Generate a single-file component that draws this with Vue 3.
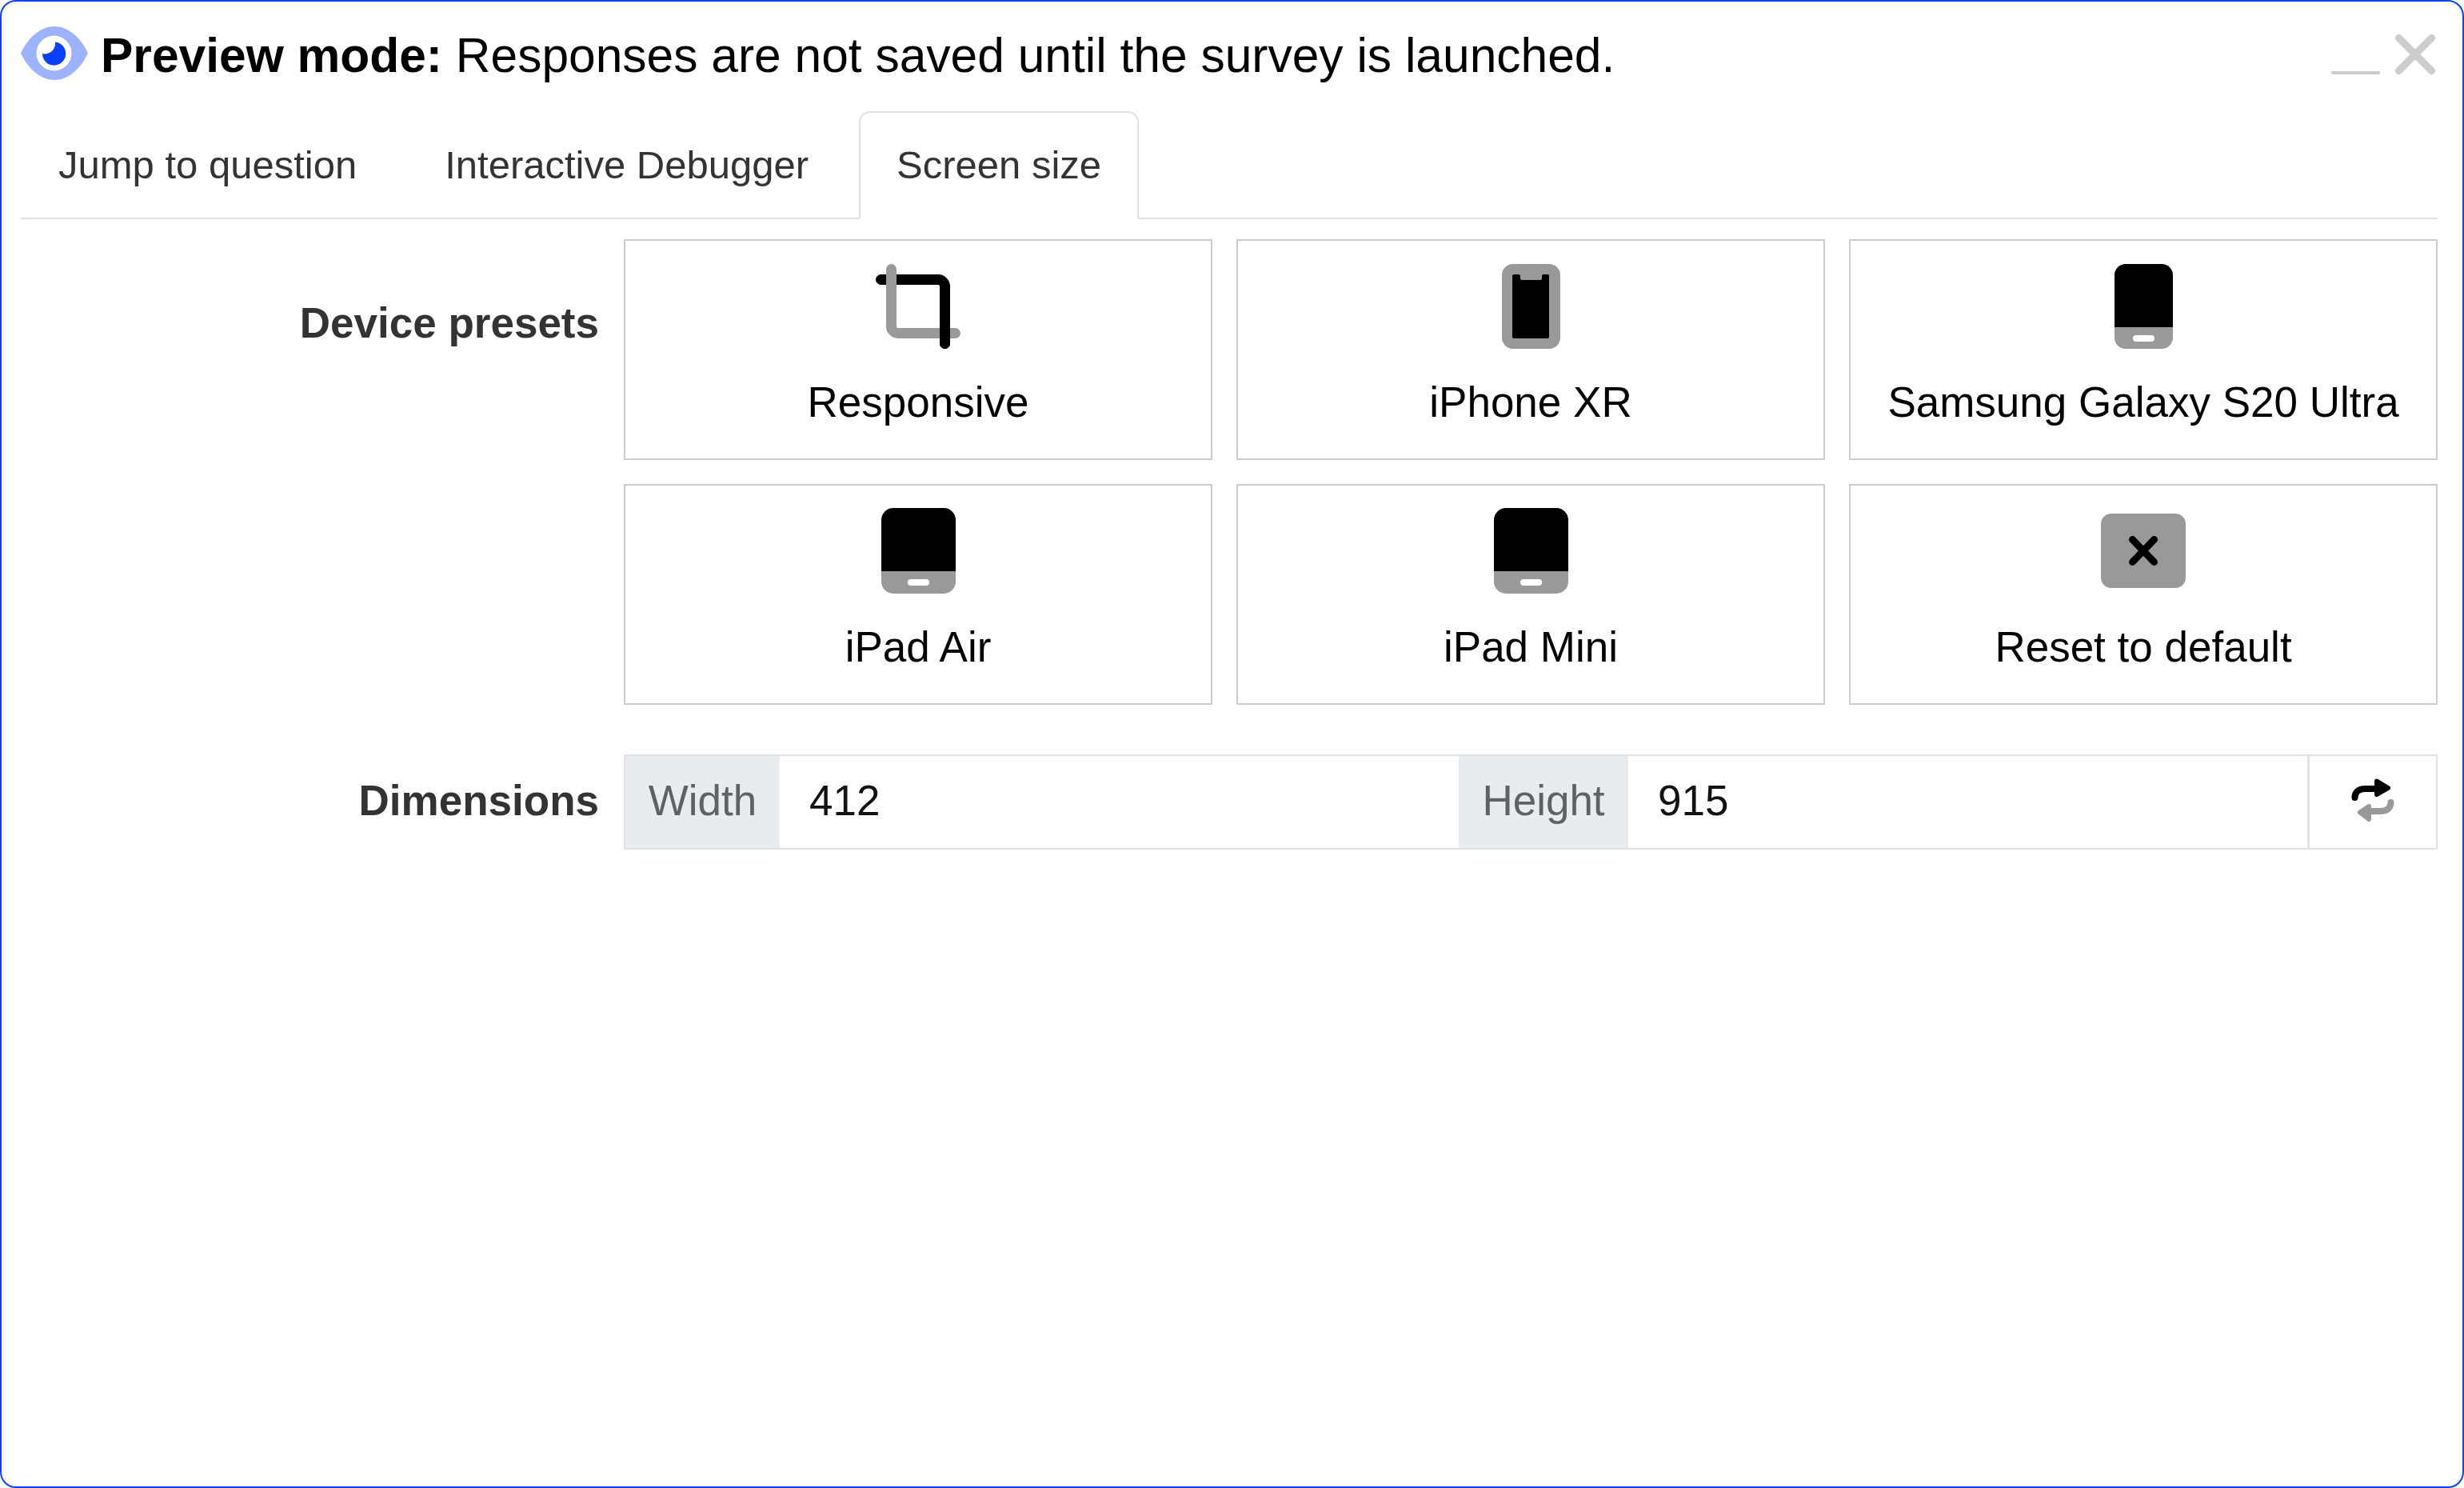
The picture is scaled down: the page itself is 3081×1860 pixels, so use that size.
<script setup>
const presets = [
  { label: 'Responsive', icon: 'crop' },
  { label: 'iPhone XR', icon: 'notch' },
  { label: 'Samsung Galaxy S20 Ultra', icon: 'phone' },
  { label: 'iPad Air', icon: 'tablet' },
  { label: 'iPad Mini', icon: 'tablet' },
  { label: 'Reset to default', icon: 'reset' },
]
</script>

<template>
  <div class="win">
    <header class="head">
      <svg class="eye" viewBox="0 0 84 67">
        <path d="M0 33.500C10 12 26 0 42 0C58 0 74 12 84 33.500C74 55 58 67 42 67C26 67 10 55 0 33.500Z" fill="#9db3ff" />
        <circle cx="41.500" cy="33.500" r="22" fill="#fff" />
        <path d="M43 19.500A14.600 14.600 0 1 1 27 34A13 13 0 0 0 43 19.500Z" fill="#0b3fff" />
      </svg>
      <p class="notice"><strong>Preview mode:</strong> Responses are not saved until the survey is launched.</p>
      <div class="winbtns">
        <svg class="min" viewBox="0 0 61 4"><rect width="61" height="4" rx="2" fill="#ccc" /></svg>
        <svg class="close" viewBox="0 0 50 50"><path d="M4.500 4.500L45.500 45.500M45.500 4.500L4.500 45.500" stroke="#ccc" stroke-width="9" stroke-linecap="round" /></svg>
      </div>
    </header>

    <nav class="tabs">
      <span class="tab">Jump to question</span>
      <span class="tab">Interactive Debugger</span>
      <span class="tab active">Screen size</span>
    </nav>

    <section class="form">
      <div class="label label-top">Device presets</div>
      <div class="presets">
        <button v-for="p in presets" :key="p.label" class="preset">
          <span class="icon-box">
            <svg v-if="p.icon === 'crop'" width="106" height="106" viewBox="0 0 106 106" fill="none" stroke-width="13" stroke-linecap="round">
              <path d="M6.500 19.500H78A8.500 8.500 0 0 1 86.500 28V99.500" stroke="#000" />
              <path d="M19.500 6.500V78A8.500 8.500 0 0 0 28 86.500H99.500" stroke="#999" />
              <path d="M86.500 70V99.500" stroke="#000" />
            </svg>
            <svg v-else-if="p.icon === 'notch'" width="73" height="106" viewBox="0 0 73 106">
              <rect width="73" height="106" rx="14" fill="#999" />
              <path d="M15 13H21A2 2 0 0 1 23 15V18A2 2 0 0 0 25 20H48A2 2 0 0 0 50 18V15A2 2 0 0 1 52 13H57A2 2 0 0 1 59 15V91A2 2 0 0 1 57 93H15A2 2 0 0 1 13 91V15A2 2 0 0 1 15 13Z" fill="#000" />
            </svg>
            <svg v-else-if="p.icon === 'phone'" width="73" height="106" viewBox="0 0 73 106">
              <path d="M0 79H73V92A14 14 0 0 1 59 106H14A14 14 0 0 1 0 92Z" fill="#999" />
              <path d="M14 0H59A14 14 0 0 1 73 14V79H0V14A14 14 0 0 1 14 0Z" fill="#000" />
              <rect x="23" y="89" width="27" height="8" rx="4" fill="#fff" />
            </svg>
            <svg v-else-if="p.icon === 'tablet'" width="93" height="107" viewBox="0 0 93 107">
              <path d="M0 79H93V92A15 15 0 0 1 78 107H15A15 15 0 0 1 0 92Z" fill="#999" />
              <path d="M15 0H78A15 15 0 0 1 93 15V79H0V15A15 15 0 0 1 15 0Z" fill="#000" />
              <rect x="33" y="89" width="27" height="8" rx="4" fill="#fff" />
            </svg>
            <svg v-else width="106" height="93" viewBox="0 0 106 93">
              <rect width="106" height="93" rx="13" fill="#999" />
              <path d="M39.500 32.500L66.500 60.500M66.500 32.500L39.500 60.500" stroke="#000" stroke-width="9" stroke-linecap="round" />
            </svg>
          </span>
          <span class="preset-text">{{ p.label }}</span>
        </button>
      </div>

      <div class="label label-dim">Dimensions</div>
      <div class="dims">
        <span class="addon addon-w">Width</span>
        <span class="val">412</span>
        <span class="addon addon-h">Height</span>
        <span class="val">915</span>
        <span class="swap">
          <svg width="54" height="54" viewBox="0 0 54 54" fill="none">
            <path d="M4.500 24C4.500 17 9 13 17 13H38" stroke="#000" stroke-width="8" stroke-linecap="round" />
            <path d="M32 3.500L46 12L32 20Z" fill="#000" stroke="#000" stroke-width="6" stroke-linejoin="round" />
            <path d="M49.500 30C49.500 37 45 41 37 41H16" stroke="#999" stroke-width="8" stroke-linecap="round" />
            <path d="M22 35L11 42.500L22 51Z" fill="#999" stroke="#999" stroke-width="6" stroke-linejoin="round" />
          </svg>
        </span>
      </div>
    </section>
  </div>
</template>

<style>
html, body { margin: 0; background: #fff; }
</style>

<style scoped>
.win {
  box-sizing: border-box;
  width: 3081px;
  height: 1860px;
  border: 2px solid #0b43ff;
  border-radius: 20px;
  background: #fff;
  padding: 0 31px 0 24px;
  font-family: "Liberation Sans", Arial, sans-serif;
  color: #000;
  display: flex;
  flex-direction: column;
}
.head {
  box-sizing: border-box;
  display: flex;
  align-items: center;
  height: 137px;
  padding-bottom: 8px;
}
.eye { width: 84px; height: 67px; flex: none; margin-right: 16px; }
.notice { margin: 4px 0 0; font-size: 60.5px; white-space: nowrap; flex: 1; }
.winbtns { display: flex; align-items: flex-end; gap: 19px; margin-right: 3px; margin-top: 2px; }
.min { width: 61px; height: 4px; display: block; }
.close { width: 50px; height: 50px; display: block; }
.tabs {
  display: flex;
  gap: 16px;
  height: 133px;
  border-bottom: 2px solid #dee2e6;
  font-size: 49px;
  color: #333;
}
.tab {
  box-sizing: border-box;
  height: 135px;
  padding: 0 45px 2px;
  display: flex;
  align-items: center;
  border: 2px solid transparent;
  border-radius: 14px 14px 0 0;
}
.active { background: #fff; border-color: #dee2e6 #dee2e6 #fff; }
.form {
  display: grid;
  grid-template-columns: 754px 1fr;
  padding-top: 25px;
}
.label {
  font-size: 53px;
  font-weight: 700;
  color: #333;
  text-align: right;
  padding-right: 31px;
  box-sizing: border-box;
  line-height: 60px;
}
.label-top { padding-top: 75px; }
.label-dim { align-self: center; padding-bottom: 4px; }
.presets {
  display: grid;
  grid-template-columns: repeat(3, 1fr);
  gap: 30px;
  margin-bottom: 62px;
}
.preset {
  box-sizing: border-box;
  height: 276px;
  border: 2px solid #ccc;
  background: #fff;
  padding: 28px 0 0;
  font: inherit;
  font-size: 53px;
  color: #000;
  display: flex;
  flex-direction: column;
  align-items: center;
}
.icon-box { height: 107px; display: flex; align-items: center; justify-content: center; }
.preset-text { margin-top: 37px; line-height: 60px; }
.dims {
  box-sizing: border-box;
  height: 119px;
  display: flex;
  border: 2px solid #dfe3e8;
  font-size: 53px;
}
.addon {
  box-sizing: border-box;
  background: #e9ecef;
  color: #5c6268;
  display: flex;
  align-items: center;
  justify-content: center;
  flex: none;
  padding-bottom: 4px;
}
.addon-w { width: 193px; }
.addon-h { width: 212px; }
.val {
  box-sizing: border-box;
  flex: 1;
  display: flex;
  align-items: center;
  padding: 0 0 4px 37px;
  color: #111;
}
.swap {
  width: 161px;
  flex: none;
  border-left: 3px solid #dfe3e8;
  display: flex;
  align-items: center;
  justify-content: center;
  box-sizing: border-box;
  padding-bottom: 5px;
}
</style>
